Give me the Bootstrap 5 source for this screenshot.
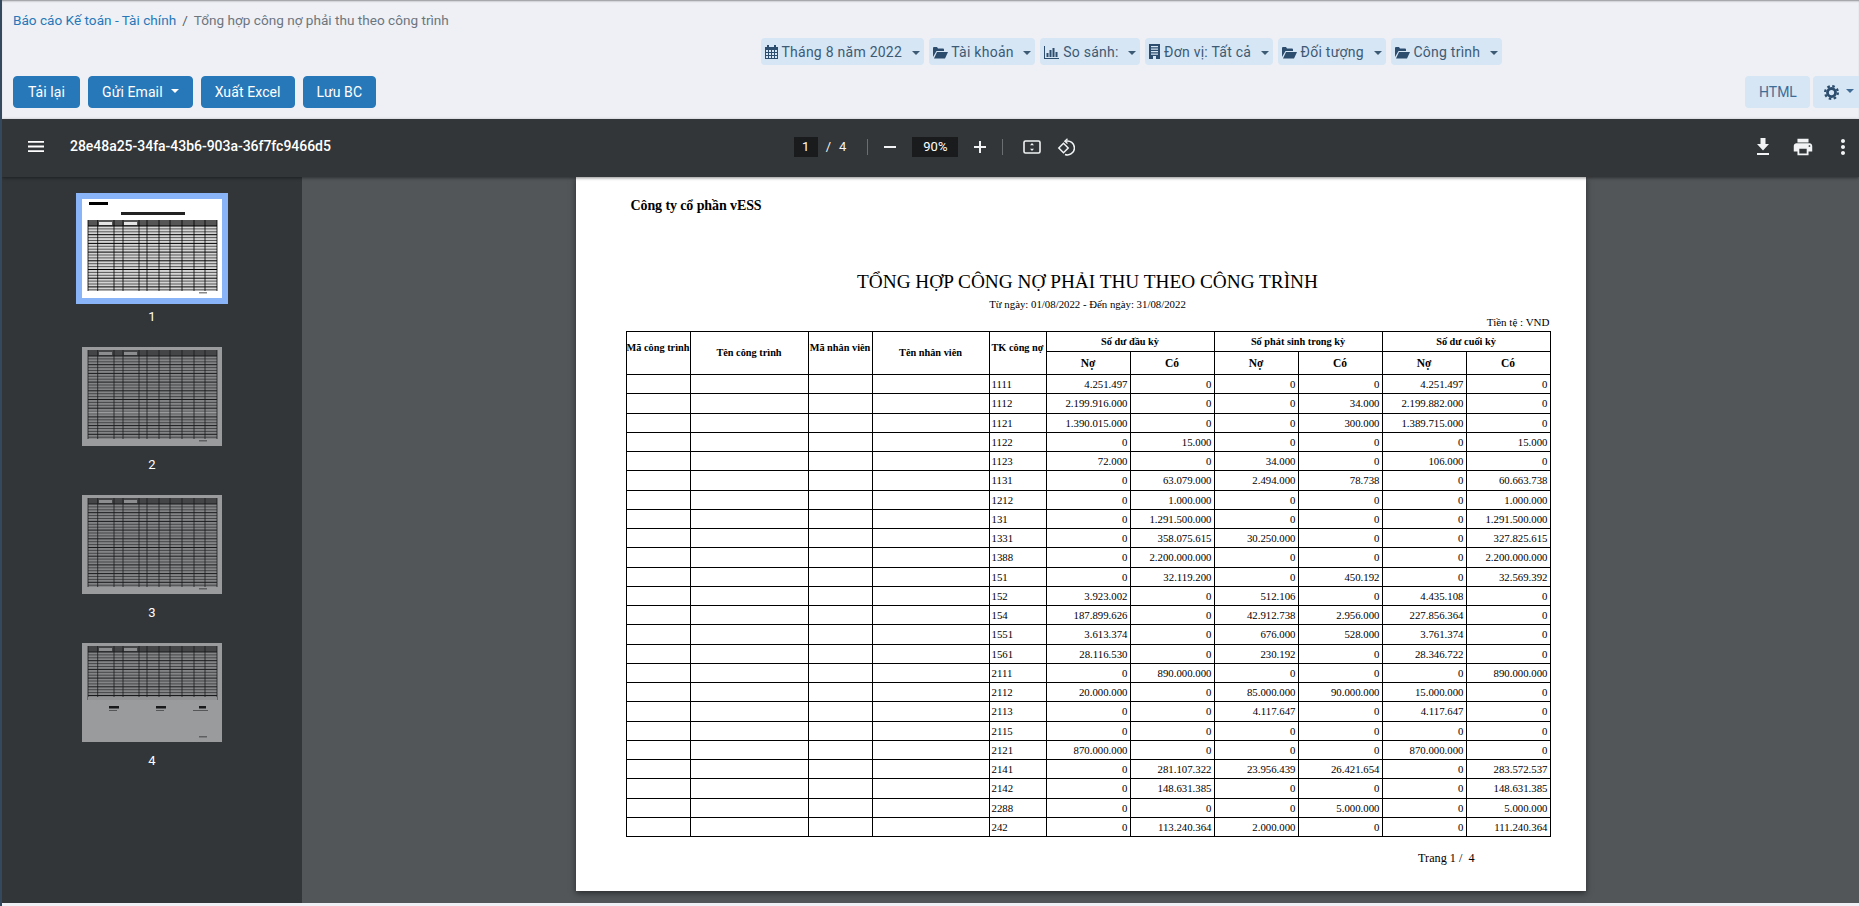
<!DOCTYPE html>
<html lang="vi">
<head>
    <meta charset="UTF-8">
    <meta name="viewport" content="width=device-width, initial-scale=1.0">
    <title>Tổng hợp công nợ phải thu theo công trình</title>
    <link href="https://cdn.jsdelivr.net/npm/bootstrap@5.3.0/dist/css/bootstrap.min.css" rel="stylesheet">
    <style>
        html, body { height: 100%; }
        body {
            overflow: hidden;
            background: #eef0f6;
            border-left: 2px solid #34495e;
            font-family: Roboto, sans-serif;
            font-size: 14px;
            display: flex;
            flex-direction: column;
        }
        .top-area { height: 119px; flex: none; box-shadow: inset 0 2px 2px -1px #8d8f92; padding-top: 11px; }
        .crumbs { padding-left: 11px; height: 18px; line-height: 18px; margin: 0; font-size: 13.6px; }
        .crumbs a { color: #2778b8; text-decoration: none; }
        .crumbs .breadcrumb-item.active { color: #6c757d; }
        .crumbs .breadcrumb-item + .breadcrumb-item { padding-left: 6px; }
        .crumbs .breadcrumb-item + .breadcrumb-item::before { padding-right: 6px; }
        .filter-row { padding-left: 759px; margin-top: 9px; height: 27px; gap: 5px; }
        .chip {
            height: 27px;
            padding: 1px 4px 0 4px;
            font-size: 14px;
            line-height: 26px;
            letter-spacing: .25px;
            background: #d6e6f4;
            color: #3d5a75;
            border: 0;
            border-radius: 4px;
            white-space: nowrap;
        }
        .chip svg { vertical-align: -2px; fill: #2c4d6e; }
        .chip.dropdown-toggle::after { margin-left: 6px; vertical-align: 2px; }
        .action-row { padding: 0 0 0 11px; margin-top: 11px; height: 32px; }
        .act-btn {
            height: 32px;
            min-width: 67px;
            padding: 0 13px;
            font-size: 14px;
            letter-spacing: .1px;
            background: #2778b8;
            border: 1px solid #2778b8;
            color: #fff;
            border-radius: 4px;
        }
        .act-btn.dropdown-toggle::after { margin-left: 8px; }
        .act-right { gap: 3px; }
        .act-light {
            height: 32px;
            padding: 0 14px;
            width: 65px;
            font-size: 14px;
            background: #d6e6f4;
            color: #3f6c97;
            border: 0;
            border-radius: 4px;
        }
        .gear-btn { width: 52px; margin-right: -6px; padding: 0; }
        .gear-btn svg { vertical-align: -3px; }

        .viewer { flex: 1; min-height: 0; background: #323639; margin-bottom: 3px; display: flex; flex-direction: column; }
        .pdf-bar {
            height: 58px;
            flex: none;
            background: #323639;
            color: #f1f3f4;
            position: relative;
            z-index: 2;
            box-shadow: 0 1px 3px rgba(0, 0, 0, .45);
            display: grid;
            grid-template-columns: 1fr auto 1fr;
            align-items: center;
            padding-bottom: 3px;
        }
        .bar-left { padding-left: 26px; }
        .file-name { margin-left: 26px; font-weight: 500; font-size: 14px; letter-spacing: -.03px; color: #fff; }
        .bar-mid { padding-left: 12px; padding-right: 4px; font-size: 13px; }
        .num-box { background: #191b1c; height: 20px; line-height: 20px; text-align: center; color: #fff; }
        .page-box { width: 24px; }
        .zoom-box { width: 46px; }
        .bar-sep { width: 1px; height: 16px; background: #6b6e70; }
        .sep-first { margin-left: 21px; }
        .fit-icon { margin-left: 20px; }
        .bar-right { padding-right: 4px; gap: 16px; }
        .pdf-body { flex: 1; min-height: 0; display: flex; }
        .thumb-side { width: 300px; flex: none; padding-top: 22px; }
        .thumb-item { height: 148px; text-align: center; color: #fff; font-size: 13px; }
        .thumb-pic { width: 140px; height: 99px; background: #fff; margin: 0 auto; display: block; opacity: .5; }
        .thumb-item.current .thumb-pic { opacity: 1; outline: 6px solid #8ab4f8; }
        .thumb-no { margin-top: 10px; line-height: 18px; }
        .pdf-main { flex: 1; min-width: 0; background: #525659; display: flex; justify-content: center; align-items: flex-start; }

        .pdf-page {
            width: 1010px;
            height: 714px;
            background: #fff;
            color: #000;
            box-shadow: 0 2px 6px rgba(0, 0, 0, .5);
            padding: 20px 36px 0 50px;
            font-family: "Liberation Serif", serif;
        }
        .company { margin-left: 5px; font-size: 14px; font-weight: bold; line-height: 18px; letter-spacing: -.1px; }
        .rep-title { margin: 54px 0 0; font-size: 19.3px; line-height: 26px; text-align: center; font-family: "Liberation Serif", serif; font-weight: normal; }
        .rep-range { font-size: 10.8px; line-height: 14px; margin-top: 2px; text-align: center; }
        .rep-unit { font-size: 11px; line-height: 14px; margin-top: 4px; text-align: right; }
        .report-tbl { width: 924px; table-layout: fixed; margin: 2px 0 0; border-color: #000; }
        .report-tbl.table > :not(caption) > * > * {
            padding: 0 2px 0 2px;
            height: 19.25px;
            font-size: 10.8px;
            line-height: 12px;
            color: #000;
            background: #fff;
            box-shadow: none;
            border: 1px solid #000;
            vertical-align: middle;
            white-space: nowrap;
            overflow: hidden;
        }
        .report-tbl.table > thead > tr > th { font-size: 10.3px; font-weight: bold; text-align: center; padding: 0; }
        .report-tbl.table > thead > tr:first-child > th { height: 20px; }
        .report-tbl.table > thead > tr:last-child > th { height: 23px; font-size: 11.5px; }
        .report-tbl.table > thead > tr > th.raised { padding-bottom: 11px; }
        .report-tbl.table > tbody > tr > td.amt { text-align: right; }
        .page-foot { font-size: 12.2px; line-height: 14px; margin-top: 14px; padding-right: 75px; text-align: right; white-space: pre; }
    </style>
</head>
<body>
    <div class="top-area">
        <nav aria-label="breadcrumb">
            <ol class="breadcrumb crumbs">
                <li class="breadcrumb-item"><a href="#">Báo cáo Kế toán - Tài chính</a></li>
                <li class="breadcrumb-item active" aria-current="page">Tổng hợp công nợ phải thu theo công trình</li>
            </ol>
        </nav>
        <div class="d-flex filter-row">
            <button class="btn chip dropdown-toggle" type="button">
                <svg width="13" height="14" viewBox="0 0 13 14"><path fill-rule="evenodd" d="M2 0h2v2h5V0h2v2h2v12H0V2h2zM1 5v2h2V5zm3 0v2h2V5zm3 0v2h2V5zm3 0v2h2V5zM1 8v2h2V8zm3 0v2h2V8zm3 0v2h2V8zm3 0v2h2V8zM1 11v2h2v-2zm3 0v2h2v-2zm3 0v2h2v-2zm3 0v2h2v-2z"/></svg> Tháng 8 năm 2022
            </button>
            <button class="btn chip dropdown-toggle" type="button">
                <svg width="15" height="13" viewBox="0 0 15 13"><path d="M0 11V2a1 1 0 0 1 1-1h3l1 1.5h5a1 1 0 0 1 1 1V5H3.500zM4 6h11l-3 6.500H1z"/></svg> Tài khoản
            </button>
            <button class="btn chip dropdown-toggle" type="button">
                <svg width="15" height="13" viewBox="0 0 15 13"><path d="M0 0h1v12h14v1H0zM2.500 7h2v4h-2zM5.500 4h2v7h-2zM8.500 2h2v9h-2zM11.500 6h2v5h-2z"/></svg> So sánh:
            </button>
            <button class="btn chip dropdown-toggle" type="button">
                <svg width="11" height="15" viewBox="0 0 11 15"><path fill-rule="evenodd" d="M0 0h11v15H0zM2 2v1.200h7V2zm0 2.500v1.200h7V4.500zM2 7v1.200h7V7zm0 2.500v1.200h7V9.500zM4 12v3h3v-3z"/></svg> Đơn vị: Tất cả
            </button>
            <button class="btn chip dropdown-toggle" type="button">
                <svg width="15" height="13" viewBox="0 0 15 13"><path d="M0 11V2a1 1 0 0 1 1-1h3l1 1.5h5a1 1 0 0 1 1 1V5H3.500zM4 6h11l-3 6.500H1z"/></svg> Đối tượng
            </button>
            <button class="btn chip dropdown-toggle" type="button">
                <svg width="15" height="13" viewBox="0 0 15 13"><path d="M0 11V2a1 1 0 0 1 1-1h3l1 1.5h5a1 1 0 0 1 1 1V5H3.500zM4 6h11l-3 6.500H1z"/></svg> Công trình
            </button>
        </div>
        <div class="d-flex justify-content-between action-row">
            <div class="d-flex gap-2">
                <button class="btn act-btn" type="button">Tải lại</button>
                <button class="btn act-btn dropdown-toggle" type="button">Gửi Email</button>
                <button class="btn act-btn" type="button">Xuất Excel</button>
                <button class="btn act-btn" type="button">Lưu BC</button>
            </div>
            <div class="d-flex act-right">
                <button class="btn act-light" type="button">HTML</button>
                <button class="btn act-light gear-btn dropdown-toggle" type="button" aria-label="Cài đặt">
                    <svg width="15" height="15" viewBox="0 0 16 16"><circle cx="8" cy="8" r="4.300" fill="none" stroke="#2c4d6e" stroke-width="3"/><circle cx="8" cy="8" r="6.800" fill="none" stroke="#2c4d6e" stroke-width="2.400" stroke-dasharray="2.700 2.640"/></svg>
                </button>
            </div>
        </div>
    </div>

    <div class="viewer">
        <div class="pdf-bar">
            <div class="d-flex align-items-center bar-left">
                <svg width="16" height="13" viewBox="3 5 18 14" fill="#fff" preserveAspectRatio="none"><path d="M3 18h18v-2H3v2zm0-5h18v-2H3v2zm0-7v2h18V6H3z"/></svg>
                <span class="file-name">28e48a25-34fa-43b6-903a-36f7fc9466d5</span>
            </div>
            <div class="d-flex align-items-center bar-mid">
                <div class="num-box page-box">1</div>
                <span class="ms-1 ps-1">/</span>
                <span class="ms-2">4</span>
                <div class="bar-sep sep-first"></div>
                <svg class="ms-3" width="12" height="12" viewBox="0 0 12 12" fill="#f1f3f4"><rect y="5" width="12" height="2"/></svg>
                <div class="num-box zoom-box ms-3">90%</div>
                <svg class="ms-3" width="12" height="12" viewBox="0 0 12 12" fill="#f1f3f4"><path d="M5 0h2v5h5v2H7v5H5V7H0V5h5z"/></svg>
                <div class="bar-sep ms-3"></div>
                <svg class="fit-icon" width="18" height="14" viewBox="0 0 18 14"><rect x="1" y="1" width="16" height="12" rx="1.500" fill="none" stroke="#f1f3f4" stroke-width="1.600"/><path d="M9 3l2 2.300H7zM9 11l2-2.300H7z" fill="#f1f3f4"/></svg>
                <svg class="ms-3" width="18" height="18" viewBox="0 0 18 18" fill="none" stroke="#f1f3f4" stroke-width="1.500"><path d="M1.800 10L6.500 5.300 11.200 10 6.500 14.700z"/><path d="M8.500 3.200a7 7 0 1 1 -.5 13.300"/><path d="M10.500 .8L7.800 3.200l2.700 2.400" stroke-width="1.300"/></svg>
            </div>
            <div class="d-flex align-items-center justify-content-end bar-right">
                <svg width="24" height="24" viewBox="0 0 24 24" fill="#f1f3f4"><path d="M18 9h-3.500V3h-5v6H6l6 6.500zM6 18v2h12v-2z"/></svg>
                <svg width="24" height="24" viewBox="-1 -1 26 26" fill="#f1f3f4"><path d="M19 8H5c-1.660 0-3 1.340-3 3v6h4v4h12v-4h4v-6c0-1.660-1.340-3-3-3zm-3 11H8v-5h8v5zm3-7c-.550 0-1-.450-1-1s.450-1 1-1 1 .450 1 1-.450 1-1 1zm-1-9H6v4h12V3z"/></svg>
                <svg width="24" height="24" viewBox="0 0 24 24" fill="#f1f3f4"><path d="M12 8c1.100 0 2-.900 2-2s-.900-2-2-2-2 .900-2 2 .900 2 2 2zm0 2c-1.100 0-2 .900-2 2s.900 2 2 2 2-.900 2-2-.900-2-2-2zm0 6c-1.100 0-2 .900-2 2s.900 2 2 2 2-.900 2-2-.900-2-2-2z"/></svg>
            </div>
        </div>
        <div class="pdf-body">
            <div class="thumb-side" id="thumbs"></div>
            <div class="pdf-main">
                <div class="pdf-page">
                    <div class="company">Công ty cổ phần vESS</div>
                    <h1 class="rep-title">TỔNG HỢP CÔNG NỢ PHẢI THU THEO CÔNG TRÌNH</h1>
                    <div class="rep-range">Từ ngày: 01/08/2022 - Đến ngày: 31/08/2022</div>
                    <div class="rep-unit">Tiền tệ : VND</div>
                    <table class="table report-tbl">
                        <colgroup>
                            <col style="width:64px"><col style="width:118px"><col style="width:64px"><col style="width:117px"><col style="width:57px">
                            <col style="width:84px"><col style="width:84px"><col style="width:84px"><col style="width:84px"><col style="width:84px"><col style="width:84px">
                        </colgroup>
                        <thead>
                            <tr>
                                <th rowspan="2" class="raised">Mã công trình</th>
                                <th rowspan="2">Tên công trình</th>
                                <th rowspan="2" class="raised">Mã nhân viên</th>
                                <th rowspan="2">Tên nhân viên</th>
                                <th rowspan="2" class="raised">TK công nợ</th>
                                <th colspan="2">Số dư đầu kỳ</th>
                                <th colspan="2">Số phát sinh trong kỳ</th>
                                <th colspan="2">Số dư cuối kỳ</th>
                            </tr>
                            <tr><th>Nợ</th><th>Có</th><th>Nợ</th><th>Có</th><th>Nợ</th><th>Có</th></tr>
                        </thead>
                        <tbody id="rows"></tbody>
                    </table>
                    <div class="page-foot">Trang 1 /  4</div>
                </div>
            </div>
        </div>
    </div>

    <script src="https://cdn.jsdelivr.net/npm/bootstrap@5.3.0/dist/js/bootstrap.bundle.min.js"></script>
    <script>
        const data = [
            ["1111", "4.251.497", "0", "0", "0", "4.251.497", "0"],
            ["1112", "2.199.916.000", "0", "0", "34.000", "2.199.882.000", "0"],
            ["1121", "1.390.015.000", "0", "0", "300.000", "1.389.715.000", "0"],
            ["1122", "0", "15.000", "0", "0", "0", "15.000"],
            ["1123", "72.000", "0", "34.000", "0", "106.000", "0"],
            ["1131", "0", "63.079.000", "2.494.000", "78.738", "0", "60.663.738"],
            ["1212", "0", "1.000.000", "0", "0", "0", "1.000.000"],
            ["131", "0", "1.291.500.000", "0", "0", "0", "1.291.500.000"],
            ["1331", "0", "358.075.615", "30.250.000", "0", "0", "327.825.615"],
            ["1388", "0", "2.200.000.000", "0", "0", "0", "2.200.000.000"],
            ["151", "0", "32.119.200", "0", "450.192", "0", "32.569.392"],
            ["152", "3.923.002", "0", "512.106", "0", "4.435.108", "0"],
            ["154", "187.899.626", "0", "42.912.738", "2.956.000", "227.856.364", "0"],
            ["1551", "3.613.374", "0", "676.000", "528.000", "3.761.374", "0"],
            ["1561", "28.116.530", "0", "230.192", "0", "28.346.722", "0"],
            ["2111", "0", "890.000.000", "0", "0", "0", "890.000.000"],
            ["2112", "20.000.000", "0", "85.000.000", "90.000.000", "15.000.000", "0"],
            ["2113", "0", "0", "4.117.647", "0", "4.117.647", "0"],
            ["2115", "0", "0", "0", "0", "0", "0"],
            ["2121", "870.000.000", "0", "0", "0", "870.000.000", "0"],
            ["2141", "0", "281.107.322", "23.956.439", "26.421.654", "0", "283.572.537"],
            ["2142", "0", "148.631.385", "0", "0", "0", "148.631.385"],
            ["2288", "0", "0", "0", "5.000.000", "0", "5.000.000"],
            ["242", "0", "113.240.364", "2.000.000", "0", "0", "111.240.364"]
        ];

        document.getElementById("rows").innerHTML = data.map(function(r) {
            let amounts = r.slice(1).map(v => '<td class="amt">' + v + "</td>").join("");
            return "<tr><td></td><td></td><td></td><td></td><td>" + r[0] + "</td>" + amounts + "</tr>";
        }).join("");

        // thumbnails: a blurred miniature of the report table
        const cols = [6, 15.7, 32, 41, 57, 65, 77, 88, 100, 112, 123, 135];
        function box(x, y, w, h, c) {
            return '<rect x="' + x + '" y="' + y + '" width="' + w + '" height="' + h + '" fill="' + c + '"/>';
        }
        function miniPage(n) {
            let top = n == 1 ? 21 : 3;
            let bottom = n == 4 ? 57 : 92;
            let s = '<svg class="thumb-pic" viewBox="0 0 140 99"><g filter="url(#soft)">';
            if (n == 1) {
                s += box(7, 3, 19, 3, "#000") + box(39, 13, 64, 3, "#222");
            }
            s += box(6, top, 129, bottom - top, "#d4d4d4");
            s += box(6, top, 129, 6, "#555");
            s += box(17, top + 2, 13, 3, "#e4e4e4") + box(42, top + 2, 13, 3, "#e4e4e4");
            if (n == 2) {
                s += box(6, 63, 129, 5, "#fff");
            }
            for (let i = 0; top + 6 + i * 2.9 < bottom; i++) {
                let y = top + 6 + i * 2.9;
                s += '<line x1="6" x2="135" y1="' + y + '" y2="' + y + '" stroke="#000" stroke-width="' + (i % 3 == 0 ? 1 : .6) + '"/>';
            }
            cols.forEach(function(x) {
                s += '<line y1="' + top + '" y2="' + bottom + '" x1="' + x + '" x2="' + x + '" stroke="#000" stroke-width=".8"/>';
            });
            if (n == 4) {
                s += box(6, 54, 129, 3, "#eee");
                s += box(27, 63, 10, 2.5, "#000") + box(74, 63, 10, 2.5, "#000") + box(117, 63, 7, 2.5, "#000");
                s += box(27, 67, 8, 1, "#777") + box(74, 67, 8, 1, "#777") + box(111, 67, 15, 1, "#777");
            }
            s += box(117, 93, 8, 1.5, "#888");
            return s + "</g></svg>";
        }
        let thumbs = '<svg width="0" height="0" class="d-block"><filter id="soft"><feGaussianBlur stdDeviation=".4"/></filter></svg>';
        [1, 2, 3, 4].forEach(function(n) {
            thumbs += '<div class="thumb-item' + (n == 1 ? " current" : "") + '">' + miniPage(n) + '<div class="thumb-no">' + n + "</div></div>";
        });
        document.getElementById("thumbs").innerHTML = thumbs;
    </script>
</body>
</html>
